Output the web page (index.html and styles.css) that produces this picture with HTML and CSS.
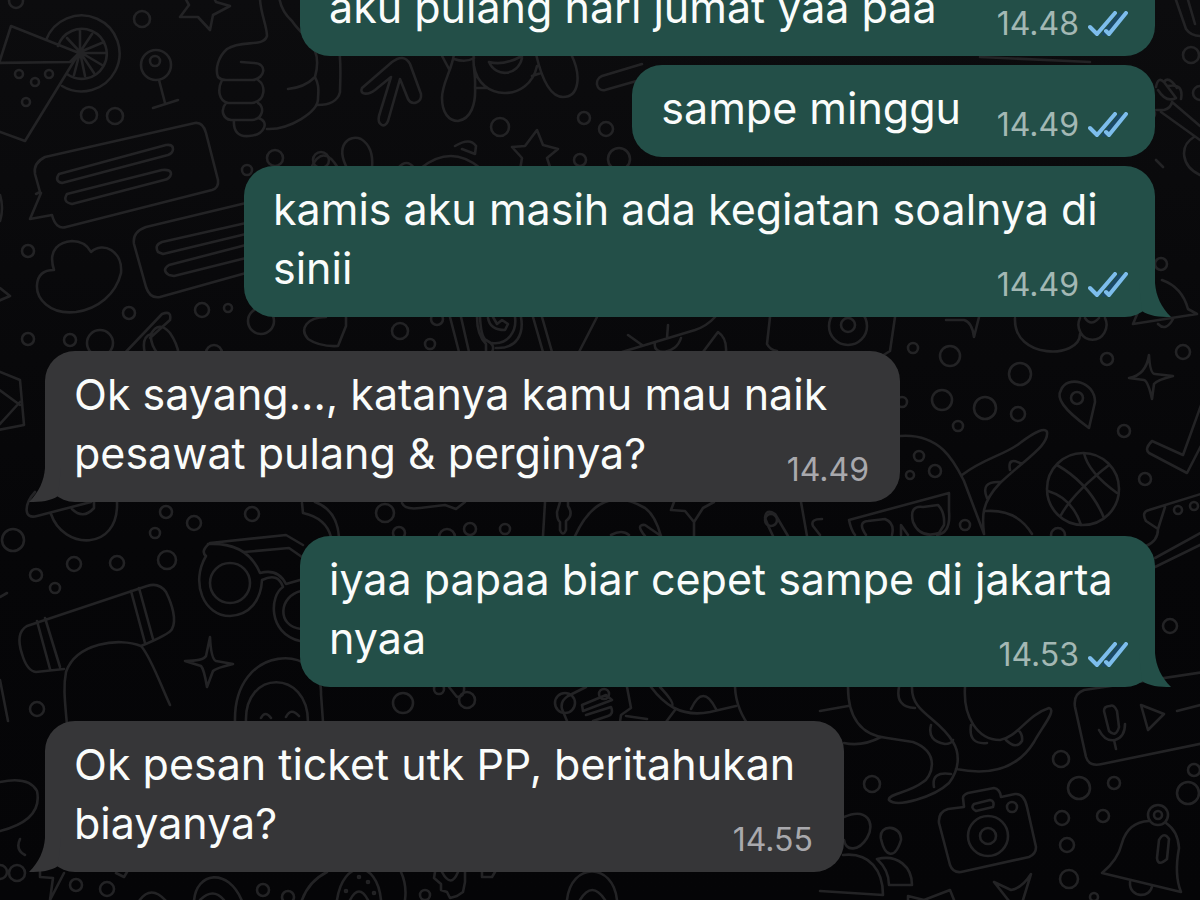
FILE: index.html
```html
<!DOCTYPE html>
<html lang="id">
<head>
<meta charset="utf-8">
<meta name="viewport" content="width=device-width, initial-scale=1">
<title>Chat</title>
<link rel="stylesheet" href="styles.css">
</head>
<body>
<svg class="defs" aria-hidden="true">
  <symbol id="tail" viewBox="0 0 32 34"><path d="M0 0H16C17 13 22 24 32 34C20 34 10 33 3 28Z"/></symbol>
  <symbol id="ticks" viewBox="0 1 40 26"><path class="tick-shade" d="M16 24 32 5"/><path d="M2 17 9 24 27 3M18 21 21 24 38 3"/></symbol>
</svg>
<main class="chat">
  <svg class="wallpaper" viewBox="0 0 1200 900" preserveAspectRatio="xMidYMid slice" aria-hidden="true">
    <!-- pizza and citrus -->
    <path d="M-8 85 11 26 79 53 70 62-8 63M79 53 25 141-8 129M46 40A38 38 0 1 1 62 86M58 46A25 25 0 1 1 67 74M80 52V29M80 52 92 34M80 52 104 42M80 53H105M80 52 102 65M80 52 94 73M80 52 85 76M80 52 74 75M80 52 67 38"/>
    <circle cx="19" cy="74" r="4"/><circle cx="35" cy="82" r="4"/><circle cx="49" cy="74" r="4"/><circle cx="26" cy="102" r="4"/>
    <!-- pin -->
    <circle cx="156" cy="65" r="15"/><circle cx="155" cy="61" r="5"/><path d="M159 80 165 103M153 108 178 100"/>
    <path d="M184-4 189 5 180 17 198 17 210 30 213 15 230 6 216 2 212-6"/>
    <!-- thumb -->
    <path d="M260-5C259 10 267 25 267 36C263 48 242 39 227 49C218 57 215 69 218 77Q221 80 226 80H253C266 78 267 63 254 63L241 62M222 80C217 90 219 101 228 103H252C266 101 266 85 258 80M226 103C220 110 223 119 231 120H252C263 119 265 107 258 103M234 120C233 132 239 137 249 136C265 135 270 121 258 118M267 129C289 130 319 112 318 98C319 87 318 83 315 77C308 84 299 88 288 89M315 77C324 45 303 38 292 21Q280 10 279-5M338 40C342 64 340 80 340 92C338 101 329 105 318 105"/>
    <!-- arrow -->
    <path d="M362 88 392 62Q404 53 410 64L421 94C422 103 412 106 408 99L400 79 388 121C385 129 377 125 379 116L391 77 375 90C367 96 359 94 362 88Z"/>
    <!-- dog -->
    <path d="M441 54 449 69M454 54C452 70 442 83 442 98C442 113 449 121 458 121C471 119 476 104 475 87C476 75 472 63 474 54M454 59Q466 63 474 58M474 66C479 101 529 103 537 66M489 62C496 78 518 76 522 58M489 62Q504 66 522 56M475 88H486M536 54C542 80 551 97 563 97C579 97 582 76 571 54M532 76 541 73M642 64 602 76C594 79 596 92 605 90L640 80"/>
    <!-- stars and berries -->
    <path d="M512 147 525 146 537 130 543 145 558 149 547 158 551 170M520 170 522 158 512 147M455 146Q470 137 476 146L475 154 462 149"/>
    <path d="M347 168C335 145 349 134 361 139Q374 147 372 168M311 168Q323 143 338 168M398 168Q407 158 414 168M421 168Q451 144 480 168"/>
    <!-- speech cards -->
    <path d="M36 194 40 192 35 174Q33 163 45 157L195 123Q203 122 206 133L218 180Q219 188 212 190L66 227Q56 230 52 215L30 219 41 193M59 174 166 145Q173 144 173 149 173 153 168 155L62 183Q54 181 59 174ZM67 194 162 170Q171 169 171 174 170 179 164 180L72 204Q62 202 67 194Z"/>
    <path d="M246 203 146 227Q132 232 134 244L146 287Q150 299 160 297L246 273M246 223 162 242Q154 245 158 252L163 254 246 234M246 245 169 265Q161 270 169 275L174 276 246 258"/>
    <!-- cloud -->
    <path d="M54 270C47 248 61 242 72 241Q85 241 91 252C103 241 123 251 121 273C116 294 98 309 76 312C49 315 36 298 37 285Q38 270 54 270Z"/>
    <path d="M0 288 10 296-4 302M0 195Q4 208 0 221M122 356 162 314Q172 310 170 320L150 338M145 354Q141 337 151 334 159 320 170 333 177 343 179 355M151 334Q150 344 158 354"/>
    <!-- row above the first reply -->
    <path d="M326 317C307 317 299 329 308 339Q320 347 338 346L346 326V317M450 317 459 352M461 317 469 352M533 317 543 352M542 317 552 352M597 317 579 352M715 317Q707 326 695 330L622 352M628 335 642 345M668 325 667 338M655 343C652 356 676 355 681 338M703 352 718 332Q727 338 726 352M770 317 767 344Q770 350 777 351M486 352V344Q477 335 477 317M480 317Q481 337 486 340 496 345 492 352M496 348C517 349 524 334 521 317M492 343C508 345 517 331 515 317M488 318Q490 330 505 330L508 324 502 320 497 324 493 317"/>
    <circle cx="848" cy="326" r="19"/><circle cx="848" cy="325" r="7"/>
    <path d="M895 317 890 351 882 356M946 320H964Q972 322 974 337L979 317M1015 318C1013 360 1080 359 1080 334M1080 318A14 15 0 1 0 1105 318M1085 318Q1091 327 1099 318M1138 312 1133 324 1197 314 1188 309Q1182 287 1162 280M1158 324Q1166 332 1173 319"/>
    <circle cx="1161" cy="264" r="6"/>
    <!-- right edge -->
    <path d="M1176 0 1186 29Q1191 36 1200 36M1188 0 1195 24M1156 87Q1158 76 1164 82L1176 98Q1166 103 1158 90M1164 82Q1168 75 1177 88M1168 86Q1184 83 1181 99M1156 110H1164Q1171 108 1172 102L1200 126M1161 112 1200 140M1194 137C1179 146 1181 166 1200 175M1156 160 1163 167"/>
    <circle cx="1191" cy="55" r="8"/><circle cx="1200" cy="93" r="7"/><circle cx="1150" cy="114" r="5"/>
    <!-- location, sparkle, ball, tick -->
    <path d="M1089 428C1063 409 1056 398 1061 390C1067 375 1095 381 1095 402Z"/><circle cx="1077" cy="398" r="6"/>
    <path d="M1149 355Q1150 374 1155 374L1173 376Q1157 380 1154 384L1152 399Q1148 381 1144 380L1129 378Q1146 375 1149 355Z"/>
    <circle cx="1083" cy="489" r="36"/><path d="M1057 465Q1090 484 1104 518M1084 453Q1088 472 1117 493M1109 465Q1073 493 1061 515M1048 491Q1072 498 1081 525"/>
    <path d="M1204 397 1183 455 1152 441Q1144 449 1149 453L1187 473 1204 440M1204 493 1149 510Q1141 512 1146 521L1158 529 1165 507M1158 529Q1158 541 1146 546M1155 558 1204 531M1155 567 1204 543"/>
    <circle cx="1178" cy="510" r="4"/><circle cx="1194" cy="506" r="4"/>
    <!-- duck with glasses -->
    <path d="M900 436C941 433 955 463 964 481L984 534M962 475C984 458 1005 455 1020 443Q1044 425 1047 432C1049 445 1028 457 1000 483C981 503 982 517 984 534M1010 470Q1007 456 1022 464M987 498Q980 481 1000 482M986 511Q1017 509 1032 534M849 520 949 493V511Q951 533 937 535M849 520Q851 530 855 535M866 535Q857 522 868 521L885 519Q895 523 892 535M913 522Q909 505 923 507L938 505Q945 512 944 525L939 533Q920 539 913 522ZM901 535V525L908 535"/>
    <circle cx="919" cy="456" r="5"/><circle cx="935" cy="471" r="6"/><circle cx="910" cy="475" r="4"/><circle cx="965" cy="525" r="5"/>
    <!-- left edge -->
    <path d="M-2 371 20 380 24 425-2 430M-2 389 20 405M20 402 0 424M35 492C24 504 23 520 37 516L91 502M51 514C63 550 119 552 117 502M72 509Q83 520 94 508V502M0 597 7 593M0 680 8 721"/>
    <!-- skateboard and person -->
    <path d="M27 626 147 586Q159 582 166 592C172 604 177 620 172 629Q170 634 141 646M64 669 36 672Q27 671 22 654 15 633 27 626M37 621 50 669M45 618 60 667M131 591 145 643M139 588 153 639M67 725C65 702 63 687 66 672C76 643 119 637 141 646C151 657 161 686 170 705 170 717 162 719M170 705 179 720M180 709Q191 702 196 720M82 650A19 19 0 1 1 117 643M88 645A10 10 0 1 1 108 643M142 720Q147 711 153 720"/>
    <!-- spectacles -->
    <path d="M303 545 286 535 210 543Q200 551 206 556C190 583 204 616 230 616C250 615 261 600 262 580Q278 572 283 587C270 595 267 633 300 641M208 544Q247 542 260 573 278 568 286 584L300 580M244 552 289 548 302 557"/>
    <circle cx="230" cy="583" r="20"/><path d="M301 591C279 596 276 626 301 629"/>
    <path d="M210 637Q211 659 216 661L233 664Q216 668 213 671L207 687Q204 669 201 666L185 661Q203 661 206 656Z"/>
    <path d="M235 722C233 642 323 643 321 694L323 722M246 722C244 669 308 669 308 722M261 718Q265 710 271 718M286 717Q291 707 299 716"/>
    <!-- row above the third bubble -->
    <path d="M302 503 303 513Q326 518 331 537M315 502Q337 510 339 537M402 503Q405 510 420 508L445 505 456 509 465 502M545 502 543 536M560 502 557 512Q557 520 560 522V530Q563 537 566 530V521Q574 515 568 506V502M575 536Q600 482 645 508 655 515 661 536M611 535Q622 529 629 535M645 536Q635 524 645 525L661 536M674 502 671 510 685 511 694 522V536M694 522 703 508 714 502M773 536Q768 526 765 518 766 508 775 514L788 536M801 502 807 536M820 535 813 526Q810 519 822 519"/>
    <!-- row above the last reply -->
    <path d="M449 687 457 697Q465 697 464 687M567 721 562 709Q560 701 568 696L586 687M627 687 631 708 621 715 620 722M582 705 606 695 612 700 583 711ZM586 715 611 707Q614 714 608 716L593 721M626 716 647 719M651 687C663 703 680 718 710 712L736 706M660 687Q675 703 672 706M691 709Q703 683 716 709M675 710 666 722M735 687Q736 710 752 730"/>
    <!-- lizard -->
    <path d="M820 711 848 706M848 687C848 725 868 736 887 738L913 742C942 753 931 778 923 782C909 793 887 794 889 800C897 808 934 797 949 783C962 766 958 750 953 742C939 717 911 713 912 687M844 743Q862 747 881 737M899 687Q895 707 915 708M931 725Q927 741 945 744 951 744 953 740M934 787Q931 771 951 774M965 687C963 716 977 740 1000 740C1018 737 1027 715 1049 708C1057 710 1042 727 1034 742C1018 768 991 776 956 769M971 725Q968 745 987 743M1006 740Q1016 750 1022 741 1023 734 1018 730"/>
    <!-- voice note -->
    <path d="M1204 672 1084 690Q1073 694 1075 707L1086 757Q1089 767 1102 764L1204 743M1110 706Q1114 704 1117 711L1119 727Q1116 738 1109 731L1104 711Q1104 706 1110 706M1099 730Q1105 742 1115 740 1125 737 1125 724M1114 740 1116 749M1141 705 1164 714 1148 730ZM1177 711 1204 704"/>
    <!-- camera -->
    <path d="M964 807 963 798Q963 795 968 793L994 788Q1000 789 1001 797L1015 794Q1024 793 1027 807L1036 847Q1036 854 1029 857L961 872Q953 873 950 865L939 823Q938 812 948 809ZM974 804 990 800Q995 801 993 807L976 811Q970 808 974 804Z"/>
    <circle cx="988" cy="836" r="20"/><circle cx="988" cy="836" r="8"/><circle cx="1012" cy="807" r="5"/>
    <!-- bell -->
    <circle cx="1158" cy="815" r="10"/><circle cx="1158" cy="815" r="4"/>
    <path d="M1149 821Q1128 822 1122 843 1118 860 1102 873L1181 892Q1174 875 1179 848 1178 831 1166 823M1159 840Q1164 831 1169 839L1167 859Q1158 867 1157 858ZM1130 882C1129 899 1151 898 1152 886"/>
    <!-- people -->
    <path d="M844 817C867 807 876 823 867 838 859 851 846 852 844 840M843 855C870 852 883 871 883 895L820 891M881 839C878 823 902 825 901 840C895 860 885 857 881 839ZM877 859C898 854 912 867 912 885H889Q889 870 877 859ZM994 882 1011 890Q1022 888 1031 874L1023 900M994 882 1009 901M908 900V896L924 900 950 890 954 900"/>
    <!-- bottom edge -->
    <path d="M40 872V877L53 878 50 900 64 873M116 873 124 877 127 872M139 901Q151 884 166 901M194 901C196 872 228 867 242 901M200 900Q213 887 224 900M302 900Q309 881 327 872M337 900C343 859 377 859 381 900M350 900Q359 883 368 900M401 872Q407 885 405 900M435 872 434 878 441 884V890L447 892 450 898 457 896 463 892 465 882V872M442 872Q451 889 458 872M20 839Q15 850 25 855M482 872V877H492L495 872M567 900C571 862 613 862 617 900M580 900Q592 880 605 900"/>
    <circle cx="359" cy="877" r="1"/><circle cx="368" cy="882" r="1"/><circle cx="346" cy="891" r="1"/><circle cx="374" cy="893" r="1"/>
    <path d="M0 782Q29 776 37 791 43 820 0 831M980 57 1090 62"/>
    <!-- loose dots -->
    <g>
      <circle cx="16" cy="1" r="7"/><circle cx="142" cy="19" r="8"/><circle cx="89" cy="115" r="8"/><circle cx="115" cy="116" r="8"/><circle cx="247" cy="170" r="5"/><circle cx="275" cy="158" r="8"/><circle cx="321" cy="160" r="8"/>
      <circle cx="500" cy="127" r="9"/><circle cx="584" cy="118" r="6"/><circle cx="606" cy="129" r="7"/><circle cx="619" cy="159" r="11"/><circle cx="580" cy="160" r="6"/>
      <circle cx="28" cy="251" r="6"/><circle cx="129" cy="313" r="6"/><circle cx="202" cy="310" r="7"/><circle cx="228" cy="308" r="4"/><circle cx="261" cy="321" r="13"/><circle cx="28" cy="339" r="6"/><circle cx="70" cy="340" r="6"/><circle cx="100" cy="343" r="13"/><circle cx="214" cy="353" r="8"/>
      <circle cx="400" cy="331" r="8"/><circle cx="437" cy="319" r="6"/><circle cx="430" cy="344" r="5"/>
      <circle cx="913" cy="348" r="5"/><circle cx="950" cy="356" r="10"/><circle cx="1020" cy="374" r="11"/><circle cx="942" cy="400" r="10"/><circle cx="985" cy="408" r="11"/><circle cx="1018" cy="414" r="7"/><circle cx="958" cy="426" r="5"/><circle cx="902" cy="402" r="5"/><circle cx="1107" cy="359" r="6"/><circle cx="1183" cy="352" r="7"/><circle cx="1124" cy="431" r="6"/><circle cx="1145" cy="479" r="6"/><circle cx="1058" cy="535" r="7"/>
      <circle cx="13" cy="540" r="11"/><circle cx="166" cy="512" r="6"/><circle cx="194" cy="523" r="7"/><circle cx="252" cy="514" r="7"/><circle cx="155" cy="533" r="5"/><circle cx="74" cy="564" r="7"/><circle cx="117" cy="563" r="7"/><circle cx="167" cy="560" r="9"/><circle cx="36" cy="575" r="6"/><circle cx="55" cy="588" r="5"/><circle cx="37" cy="709" r="7"/>
      <circle cx="385" cy="513" r="9"/><circle cx="399" cy="533" r="6"/><circle cx="447" cy="537" r="8"/><circle cx="470" cy="529" r="6"/><circle cx="505" cy="529" r="5"/><circle cx="771" cy="520" r="6"/><circle cx="1170" cy="626" r="7"/>
      <circle cx="403" cy="703" r="10"/><circle cx="439" cy="689" r="5"/><circle cx="467" cy="700" r="8"/><circle cx="565" cy="703" r="10"/><circle cx="604" cy="694" r="5"/>
      <circle cx="872" cy="784" r="8"/><circle cx="1061" cy="759" r="8"/><circle cx="1079" cy="788" r="11"/><circle cx="1114" cy="783" r="6"/><circle cx="1188" cy="793" r="11"/><circle cx="1194" cy="770" r="6"/><circle cx="1062" cy="818" r="7"/><circle cx="1103" cy="816" r="6"/><circle cx="1067" cy="845" r="7"/><circle cx="1069" cy="879" r="9"/><circle cx="1094" cy="897" r="4"/>
      <circle cx="0" cy="872" r="7"/><circle cx="17" cy="873" r="8"/><circle cx="76" cy="885" r="6"/><circle cx="107" cy="889" r="7"/><circle cx="263" cy="890" r="6"/><circle cx="288" cy="897" r="6"/><circle cx="425" cy="895" r="5"/>
    </g>
  </svg>

  <ol class="messages">
    <li class="bubble out medium">
      <p class="text">aku pulang hari jumat yaa paa</p>
      <span class="meta"><time>14.48</time><svg class="ticks" role="img" aria-label="Dibaca"><use href="#ticks"/></svg></span>
    </li>
    <li class="bubble out">
      <p class="text">sampe minggu</p>
      <span class="meta"><time>14.49</time><svg class="ticks" role="img" aria-label="Dibaca"><use href="#ticks"/></svg></span>
    </li>
    <li class="bubble out long last">
      <p class="text">kamis aku masih ada kegiatan soalnya di<br>sinii</p>
      <span class="meta"><time>14.49</time><svg class="ticks" role="img" aria-label="Dibaca"><use href="#ticks"/></svg></span>
      <svg class="tail" aria-hidden="true"><use href="#tail"/></svg>
    </li>
    <li class="bubble in medium last">
      <p class="text">Ok sayang..., katanya kamu mau naik<br>pesawat pulang &amp; perginya?</p>
      <span class="meta"><time>14.49</time></span>
      <svg class="tail" aria-hidden="true"><use href="#tail"/></svg>
    </li>
    <li class="bubble out medium last">
      <p class="text">iyaa papaa biar cepet sampe di jakarta<br>nyaa</p>
      <span class="meta"><time>14.53</time><svg class="ticks" role="img" aria-label="Dibaca"><use href="#ticks"/></svg></span>
      <svg class="tail" aria-hidden="true"><use href="#tail"/></svg>
    </li>
    <li class="bubble in short last">
      <p class="text">Ok pesan ticket utk PP, beritahukan<br>biayanya?</p>
      <span class="meta"><time>14.55</time></span>
      <svg class="tail" aria-hidden="true"><use href="#tail"/></svg>
    </li>
  </ol>
</main>
</body>
</html>
```
FILE: styles.css
```css
* { box-sizing: border-box; }

body {
  margin: 0;
  background: #060608;
  font-family: Inter, "Liberation Sans", sans-serif;
}

.defs { position: absolute; width: 0; height: 0; }

.chat {
  position: relative;
  display: flex;
  flex-direction: column;
  justify-content: flex-end;
  height: 100vh;
  overflow: hidden;
  background: linear-gradient(#0c0c0e, #060608 60%, #050507);
}

.wallpaper {
  position: absolute;
  inset: 0;
  width: 100%;
  height: 100%;
  fill: none;
  stroke: #232325;
  stroke-width: 2.6;
  stroke-linecap: round;
  stroke-linejoin: round;
}

.messages {
  position: relative;
  display: flex;
  flex-direction: column;
  gap: 9px;
  margin: 0;
  padding: 0 45px 28px;
  list-style: none;
}

.bubble {
  position: relative;
  display: grid;
  max-width: 100%;
  padding: 14px 27px 19px 29px;
  border-radius: 30px;
  color: #fafcfb;
}

.out { align-self: flex-end; background: #234f48; }
.in { align-self: flex-start; background: #363638; }
.last + .bubble { margin-top: 25px; }
.long { width: 911px; }
.medium { width: 855px; }
.short { width: 799px; }

.text {
  grid-area: 1 / 1;
  margin: 0;
  font-size: 43px;
  line-height: 59px;
}

.bubble:not(.last) .text { padding-right: 167px; }

.meta {
  grid-area: 1 / 1;
  align-self: end;
  justify-self: end;
  display: flex;
  align-items: center;
  gap: 9px;
  color: #a3b8b4;
  font-size: 32px;
  line-height: 26px;
}

.in .meta { padding-right: 4px; color: #a9a9ad; }

.ticks {
  width: 40px;
  height: 26px;
  fill: none;
  stroke: #7dbdec;
  stroke-width: 4;
  stroke-linecap: round;
  stroke-linejoin: round;
}

.tick-shade { stroke: #1b4a68; }

.tail {
  position: absolute;
  right: -16px;
  bottom: 0;
  width: 32px;
  height: 34px;
  fill: #234f48;
}

.in .tail {
  right: auto;
  left: -16px;
  fill: #363638;
  transform: scaleX(-1);
}
```
